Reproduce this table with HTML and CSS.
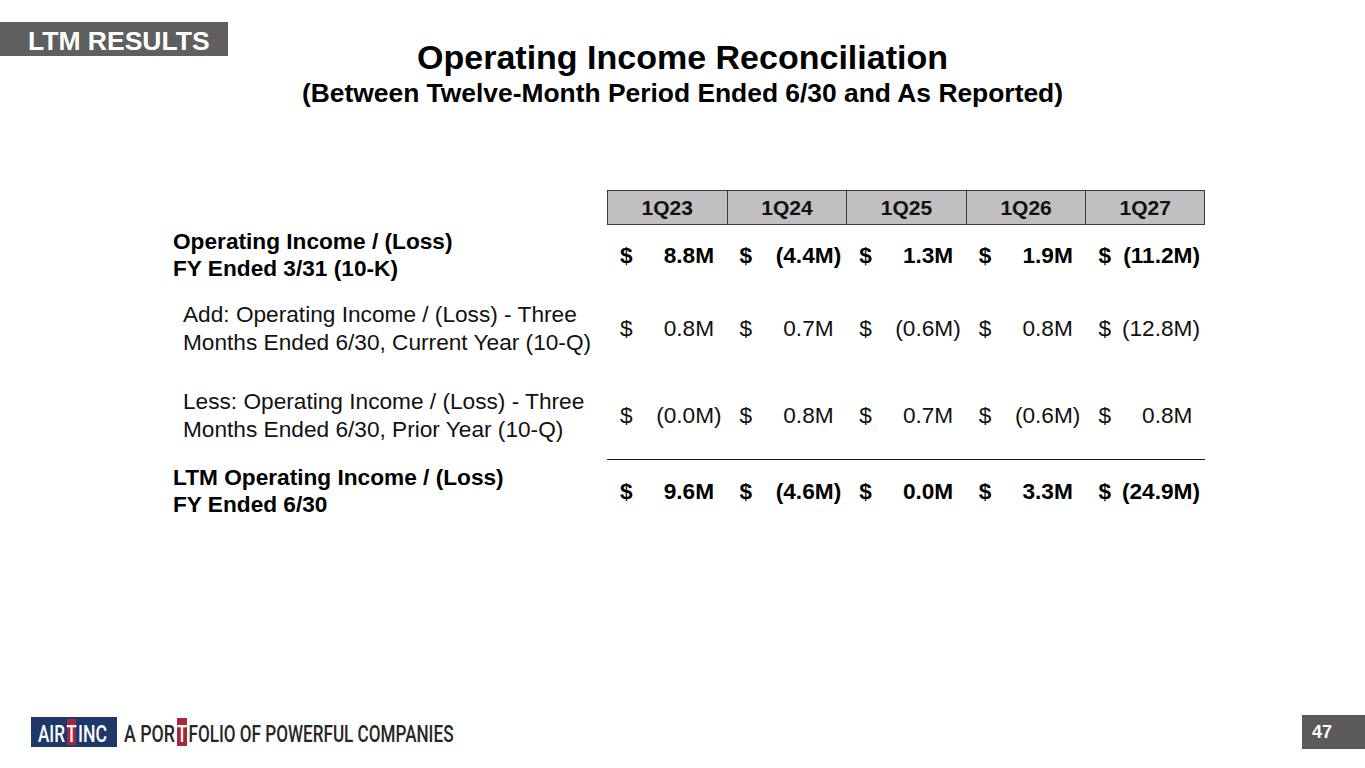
FILE: index.html
```html
<!DOCTYPE html>
<html lang="en">
<head>
<meta charset="utf-8">
<title>Operating Income Reconciliation</title>
<link rel="stylesheet" href="styles.css">
</head>
<body>
<div class="slide">
  <header class="head">
    <div class="tag">LTM RESULTS</div>
    <div class="titles">
      <h1 class="title">Operating Income Reconciliation</h1>
      <h2 class="subtitle">(Between Twelve-Month Period Ended 6/30 and As Reported)</h2>
    </div>
    <div></div>
  </header>

  <main class="recon">
    <div class="label"></div>
    <div class="hcell first">1Q23</div>
    <div class="hcell">1Q24</div>
    <div class="hcell">1Q25</div>
    <div class="hcell">1Q26</div>
    <div class="hcell last">1Q27</div>

    <div class="label bold">Operating Income / (Loss)<br>FY Ended 3/31 (10-K)</div>
    <div class="val bold"><span>$</span><span>8.8M<span class="pad">)</span></span></div>
    <div class="val bold"><span>$</span><span>(4.4M)</span></div>
    <div class="val bold"><span>$</span><span>1.3M<span class="pad">)</span></span></div>
    <div class="val bold"><span>$</span><span>1.9M<span class="pad">)</span></span></div>
    <div class="val bold"><span>$</span><span>(11.2M)</span></div>

    <div class="label reg">Add: Operating Income / (Loss) - Three<br>Months Ended 6/30, Current Year (10-Q)</div>
    <div class="val"><span>$</span><span>0.8M<span class="pad">)</span></span></div>
    <div class="val"><span>$</span><span>0.7M<span class="pad">)</span></span></div>
    <div class="val"><span>$</span><span>(0.6M)</span></div>
    <div class="val"><span>$</span><span>0.8M<span class="pad">)</span></span></div>
    <div class="val"><span>$</span><span>(12.8M)</span></div>

    <div class="label reg">Less: Operating Income / (Loss) - Three<br>Months Ended 6/30, Prior Year (10-Q)</div>
    <div class="val"><span>$</span><span>(0.0M)</span></div>
    <div class="val"><span>$</span><span>0.8M<span class="pad">)</span></span></div>
    <div class="val"><span>$</span><span>0.7M<span class="pad">)</span></span></div>
    <div class="val"><span>$</span><span>(0.6M)</span></div>
    <div class="val"><span>$</span><span>0.8M<span class="pad">)</span></span></div>

    <div class="label bold">LTM Operating Income / (Loss)<br>FY Ended 6/30</div>
    <div class="val bold total"><span>$</span><span>9.6M<span class="pad">)</span></span></div>
    <div class="val bold total"><span>$</span><span>(4.6M)</span></div>
    <div class="val bold total"><span>$</span><span>0.0M<span class="pad">)</span></span></div>
    <div class="val bold total"><span>$</span><span>3.3M<span class="pad">)</span></span></div>
    <div class="val bold total"><span>$</span><span>(24.9M)</span></div>
  </main>

  <footer class="foot">
    <svg class="logo" width="425" height="30" viewBox="0 0 425 30" xmlns="http://www.w3.org/2000/svg">
      <rect x="0" y="0" width="86" height="30" fill="#1d3869"/>
      <rect x="36" y="2" width="9" height="26" fill="#a8263b"/>
      <rect x="146" y="1" width="10" height="28" fill="#a8263b"/>
      <g transform="translate(0,25) scale(1,1.45)" class="logotext">
        <text x="7" y="0" font-size="16.5" textLength="27" lengthAdjust="spacingAndGlyphs" fill="#ffffff">AIR</text>
        <text x="40.5" y="0" font-size="16.5" text-anchor="middle" fill="#ffffff">T</text>
        <text x="47" y="0" font-size="16.5" textLength="29" lengthAdjust="spacingAndGlyphs" fill="#ffffff">INC</text>
        <text x="93" y="0" font-size="16.5" textLength="51" lengthAdjust="spacingAndGlyphs" fill="#262626">A POR</text>
        <text x="151" y="0" font-size="16.5" text-anchor="middle" fill="#ffffff">T</text>
        <text x="157.5" y="0" font-size="16.5" textLength="265" lengthAdjust="spacingAndGlyphs" fill="#262626">FOLIO OF POWERFUL COMPANIES</text>
      </g>
    </svg>
    <div class="pagenum">47</div>
  </footer>
</div>
</body>
</html>
```
FILE: styles.css
```css
* { box-sizing: border-box; }

html, body {
  margin: 0;
  padding: 0;
  background: #ffffff;
}

body {
  font-family: "Liberation Sans", Arial, Helvetica, sans-serif;
  color: #000;
}

.slide {
  width: 1365px;
  height: 768px;
  overflow: hidden;
  display: flex;
  flex-direction: column;
}

.head {
  display: grid;
  grid-template-columns: 228px 1fr 228px;
}

.tag {
  margin-top: 22px;
  height: 34px;
  background: #5f5f5f;
  color: #ffffff;
  font-weight: bold;
  font-size: 26.5px;
  line-height: 30px;
  padding: 4px 0 0 28px;
  white-space: nowrap;
  align-self: start;
}

.titles {
  padding-top: 37px;
  text-align: center;
}

.title {
  margin: 0;
  font-size: 34px;
  line-height: 40px;
  font-weight: bold;
}

.subtitle {
  margin: 0;
  font-size: 26.4px;
  line-height: 32px;
  font-weight: bold;
}

.recon {
  margin-top: 81px;
  margin-left: 173px;
  width: 1032px;
  display: grid;
  grid-template-columns: 434px repeat(5, 1fr);
  grid-template-rows: 35px 60px 86px 88px 64px;
  font-size: 22.67px;
}

.hcell {
  background: #c0c0c0;
  border-top: 1.5px solid #3a3a3a;
  border-bottom: 1.5px solid #3a3a3a;
  border-left: 1.5px solid #3a3a3a;
  display: flex;
  align-items: center;
  justify-content: center;
  font-weight: bold;
  font-size: 21px;
  color: #111;
}

.hcell.last {
  border-right: 1.5px solid #3a3a3a;
}

.label {
  display: flex;
  align-items: center;
}

.label.bold {
  font-weight: bold;
  line-height: 27.5px;
}

.label.reg {
  padding-left: 10px;
  line-height: 28px;
  color: #111;
}

.val {
  display: flex;
  align-items: center;
  justify-content: space-between;
  padding: 0 5px 0 13px;
  white-space: nowrap;
  color: #111;
}

.val.bold {
  font-weight: bold;
  color: #000;
}

.val.total {
  border-top: 1.5px solid #1a1a1a;
}

.pad {
  visibility: hidden;
}

.foot {
  margin-top: auto;
  margin-bottom: 19px;
  height: 34px;
  display: flex;
  align-items: center;
  justify-content: space-between;
  padding-left: 31px;
}

.logo {
  display: block;
}

.logotext {
  font-family: Roboto, "Liberation Sans", sans-serif;
  font-weight: 500;
}

.pagenum {
  width: 63px;
  height: 34px;
  background: #5a5a5a;
  color: #ffffff;
  font-weight: bold;
  font-size: 18px;
  line-height: 34px;
  padding-left: 10px;
}
```
